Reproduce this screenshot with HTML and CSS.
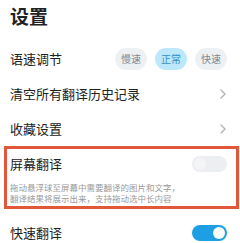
FILE: index.html
```html
<!DOCTYPE html>
<html lang="zh-CN">
<head>
    <meta charset="UTF-8">
    <meta name="viewport" content="width=device-width, initial-scale=1.0">
    <title>设置</title>
    <link rel="stylesheet" href="styles.css">
</head>
<body>

    <h1 class="title">设置</h1>

    <div class="settings">
        <div class="row">
            <span class="label">语速调节</span>
            <div class="speeds">
                <span class="pill">慢速</span>
                <span class="pill active">正常</span>
                <span class="pill">快速</span>
            </div>
        </div>

        <div class="row">
            <span class="label">清空所有翻译历史记录</span>
            <svg class="chevron" width="6" height="10" viewBox="0 0 6 10">
                <path d="M1 1 L5 5 L1 9" fill="none" stroke="#b3b3b3" stroke-width="1.4" stroke-linecap="round" stroke-linejoin="round"/>
            </svg>
        </div>

        <div class="row">
            <span class="label">收藏设置</span>
            <svg class="chevron" width="6" height="10" viewBox="0 0 6 10">
                <path d="M1 1 L5 5 L1 9" fill="none" stroke="#b3b3b3" stroke-width="1.4" stroke-linecap="round" stroke-linejoin="round"/>
            </svg>
        </div>

        <div class="highlight">
            <div class="row short">
                <span class="label">屏幕翻译</span>
                <span class="toggle"></span>
            </div>
            <p class="desc">拖动悬浮球至屏幕中需要翻译的图片和文字，<br>翻译结果将展示出来，支持拖动选中长内容</p>
        </div>

        <div class="row quick">
            <span class="label">快速翻译</span>
            <span class="toggle on"></span>
        </div>
    </div>

</body>
</html>
```

FILE: styles.css
```css
body {
    margin: 0;
    background: #fff;
    font-family: "Noto Sans CJK SC", "Noto Sans", sans-serif;
    color: #222;
    overflow: hidden;
}

.title {
    margin: 4px 0 0 10px;
    font-size: 19px;
    line-height: 24px;
    font-weight: 700;
    color: #1f2326;
}

.settings {
    padding: 0 13px 0 10px;
    margin-top: 13px;
}

.row {
    height: 35px;
    display: flex;
    align-items: center;
    justify-content: space-between;
}

.label {
    font-size: 13px;
    line-height: 18px;
}

.speeds {
    display: flex;
    gap: 8px;
}

.pill {
    height: 22px;
    line-height: 22px;
    padding: 0 6px;
    border-radius: 11px;
    font-size: 10px;
    background: #eef1f4;
    color: #7d8893;
}

.pill.active {
    background: #bde7fb;
    color: #3a8fc4;
}

.chevron {
    margin-right: 1px;
}

.highlight {
    margin: 0 -12px 0 -6px;
    padding: 0 9px 0 3px;
    border: 3px solid #e2563a;
}

.row.short {
    height: 29px;
}

.desc {
    margin: 4px 0 2px;
    font-size: 8.5px;
    line-height: 11px;
    color: #9a9a9a;
}

.row.quick {
    margin-top: 6px;
}

.toggle {
    position: relative;
    width: 35px;
    height: 16px;
    border-radius: 8px;
    background: #eceef1;
}

.toggle::after {
    content: "";
    position: absolute;
    top: 2px;
    left: 2px;
    width: 12px;
    height: 12px;
    border-radius: 50%;
    background: #f4f5f7;
}

.toggle.on {
    background: #1e9fe3;
}

.toggle.on::after {
    left: 21px;
    background: #fff;
}
```
